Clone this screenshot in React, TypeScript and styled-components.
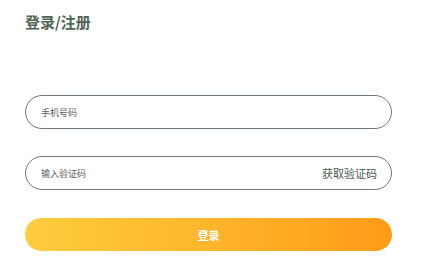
import styled, { createGlobalStyle } from 'styled-components';

const GlobalStyle = createGlobalStyle`
  html, body {
    margin: 0;
    padding: 0;
    background: #ffffff;
    font-family: "Noto Sans", "Noto Sans CJK SC", sans-serif;
  }
`;

const Page = styled.div`
  display: flex;
  flex-direction: column;
  width: 367px;
  padding: 11px 0 0 25px;
  box-sizing: content-box;
`;

const Title = styled.h1`
  margin: 0;
  font-size: 15px;
  line-height: 22px;
  font-weight: 700;
  color: #4f6453;
  font-family: "Noto Sans CJK SC", sans-serif;
`;

const Form = styled.div`
  display: flex;
  flex-direction: column;
  margin-top: 62px;
`;

const Field = styled.div<{ $gap?: number }>`
  display: flex;
  align-items: center;
  justify-content: space-between;
  height: 34px;
  margin-top: ${({ $gap }) => $gap ?? 0}px;
  padding: 0 14px 0 15px;
  box-sizing: border-box;
  border: 1px solid #6f7a73;
  border-radius: 17px;
`;

const Placeholder = styled.span`
  font-size: 9px;
  color: #5a5f5c;
  font-family: "Noto Sans CJK SC", sans-serif;
`;

const CodeLink = styled.span`
  font-size: 11px;
  color: #4a5a4f;
  font-family: "Noto Sans CJK SC", sans-serif;
`;

const SubmitButton = styled.button`
  display: flex;
  align-items: center;
  justify-content: center;
  height: 33px;
  margin-top: 28px;
  border: none;
  border-radius: 17px;
  background: linear-gradient(90deg, #ffcd40 0%, #ffb52c 50%, #ff9b17 100%);
  color: #ffffff;
  font-size: 11px;
  font-weight: 700;
  font-family: "Noto Sans CJK SC", sans-serif;
`;

export default function App(): JSX.Element {
  return (
    <>
      <GlobalStyle />
      <Page>
        <Title>登录/注册</Title>
        <Form>
          <Field>
            <Placeholder>手机号码</Placeholder>
          </Field>
          <Field $gap={27}>
            <Placeholder>输入验证码</Placeholder>
            <CodeLink>获取验证码</CodeLink>
          </Field>
          <SubmitButton>登录</SubmitButton>
        </Form>
      </Page>
    </>
  );
}
